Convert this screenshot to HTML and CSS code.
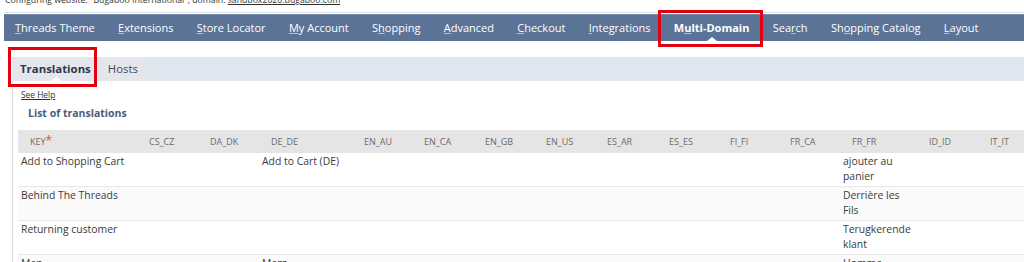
FILE: index.html
```html
<!DOCTYPE html>
<html>
<head>
    <meta charset="UTF-8">
    <title>Multi-Domain - Translations</title>
    <link rel="stylesheet" href="styles.css">
</head>
<body>
    <div class="config-line">Configuring website: "Bugaboo International", domain: <a href="#">sandbox2020.bugaboo.com</a></div>

    <div class="main-nav">
        <a href="#" class="nav-item"><u>T</u>hreads Theme</a>
        <a href="#" class="nav-item"><u>E</u>xtensions</a>
        <a href="#" class="nav-item"><u>S</u>tore Locator</a>
        <a href="#" class="nav-item"><u>M</u>y Account</a>
        <a href="#" class="nav-item">S<u>h</u>opping</a>
        <a href="#" class="nav-item"><u>A</u>dvanced</a>
        <a href="#" class="nav-item"><u>C</u>heckout</a>
        <a href="#" class="nav-item"><u>I</u>ntegrations</a>
        <a href="#" class="nav-item nav-active">M<u>u</u>lti-Domain</a>
        <a href="#" class="nav-item">Sea<u>r</u>ch</a>
        <a href="#" class="nav-item">Sh<u>o</u>pping Catalog</a>
        <a href="#" class="nav-item"><u>L</u>ayout</a>
    </div>

    <div class="sub-tabs">
        <a href="#" class="sub-tab sub-active">Translations</a>
        <a href="#" class="sub-tab">Hosts</a>
    </div>

    <div class="content">
        <a href="#" class="see-help">See Help</a>
        <div class="list-title">List of translations</div>

        <table class="trans-table">
            <colgroup>
                <col style="width:119px"><col style="width:61px"><col style="width:61px"><col style="width:93px">
                <col style="width:60px"><col style="width:61px"><col style="width:61px"><col style="width:61px">
                <col style="width:62px"><col style="width:61px"><col style="width:60px"><col style="width:62px">
                <col style="width:77px"><col style="width:61px"><col style="width:61px">
            </colgroup>
            <thead>
                <tr>
                    <th>KEY<span class="req">*</span></th>
                    <th>CS_CZ</th><th>DA_DK</th><th>DE_DE</th><th>EN_AU</th><th>EN_CA</th><th>EN_GB</th>
                    <th>EN_US</th><th>ES_AR</th><th>ES_ES</th><th>FI_FI</th><th>FR_CA</th><th>FR_FR</th>
                    <th>ID_ID</th><th>IT_IT</th>
                </tr>
            </thead>
            <tbody>
                <tr>
                    <td>Add to Shopping Cart</td><td></td><td></td><td>Add to Cart (DE)</td><td></td><td></td><td></td>
                    <td></td><td></td><td></td><td></td><td></td><td>ajouter au panier</td><td></td><td></td>
                </tr>
                <tr class="odd">
                    <td>Behind The Threads</td><td></td><td></td><td></td><td></td><td></td><td></td>
                    <td></td><td></td><td></td><td></td><td></td><td>Derrière les Fils</td><td></td><td></td>
                </tr>
                <tr>
                    <td>Returning customer</td><td></td><td></td><td></td><td></td><td></td><td></td>
                    <td></td><td></td><td></td><td></td><td></td><td>Terugkerende klant</td><td></td><td></td>
                </tr>
                <tr class="odd">
                    <td>Men</td><td></td><td></td><td>Mezz</td><td></td><td></td><td></td>
                    <td></td><td></td><td></td><td></td><td></td><td>Homme</td><td></td><td></td>
                </tr>
            </tbody>
        </table>
    </div>

    <div class="mark mark-nav"></div>
    <div class="mark mark-tab"></div>
</body>
</html>
```

FILE: styles.css
```css
body {
    margin: 0;
    font-family: "Open Sans", Arial, sans-serif;
    color: #333;
    background-color: #fff;
    overflow: hidden;
    position: relative;
}

a {
    color: inherit;
}

.config-line {
    margin: -6px 0 0 5px;
    padding-bottom: 6px;
    font-size: 8.7px;
    line-height: 12px;
    white-space: nowrap;
    border-bottom: 1px solid #d9dbe2;
}

.main-nav {
    display: flex;
    margin: 1px 0 0 4px;
    height: 27px;
    background-color: #5b7397;
    border-top: 1px solid #7489a8;
    box-sizing: border-box;
}

.nav-item {
    position: relative;
    padding: 0 12.3px 0 11px;
    font-size: 11px;
    line-height: 26px;
    color: #fff;
    text-decoration: none;
    white-space: nowrap;
}

.nav-item u {
    text-decoration-color: rgba(255, 255, 255, 0.55);
}

.nav-active {
    font-weight: bold;
}

.nav-active::after {
    content: "";
    position: absolute;
    left: 50%;
    bottom: 0;
    margin-left: -5px;
    border-left: 5px solid transparent;
    border-right: 5px solid transparent;
    border-bottom: 4px solid #fff;
}

.sub-tabs {
    display: flex;
    margin: 16px 0 0 12px;
    height: 24px;
    background-color: #e0e6ef;
}

.sub-tab {
    position: relative;
    padding: 0 9px 0 8px;
    font-size: 11.4px;
    line-height: 24px;
    color: #3d4a5c;
    text-decoration: none;
    background-color: #e4e6ec;
}

.sub-active {
    font-weight: bold;
    color: #2a384d;
}

.sub-active::after {
    content: "";
    position: absolute;
    left: 50%;
    bottom: 0;
    margin-left: -6px;
    border-left: 6px solid transparent;
    border-right: 6px solid transparent;
    border-bottom: 4px solid #fff;
}

.content {
    margin-left: 12px;
    padding: 8px 0 0 5px;
    border-left: 1px solid #dcdcdc;
    height: 200px;
}

.see-help {
    display: block;
    margin-left: 3px;
    font-size: 8.4px;
    line-height: 12px;
    color: #333;
}

.list-title {
    margin: 4px 0 0 10px;
    font-size: 10.5px;
    font-weight: bold;
    line-height: 16px;
    color: #4a5b77;
}

.trans-table {
    margin-top: 9px;
    table-layout: fixed;
    width: 1021px;
    border-collapse: collapse;
    font-size: 10.4px;
}

.trans-table th {
    height: 23px;
    padding: 0 4px 0 12px;
    text-align: left;
    font-size: 9px;
    font-weight: normal;
    color: #6b6b6b;
    background-color: #e5e5e5;
    white-space: nowrap;
}

.req {
    color: #e0582a;
    font-size: 12px;
    vertical-align: top;
    line-height: 12px;
}

.trans-table td {
    height: 30px;
    padding: 1px 4px 2px 3px;
    vertical-align: top;
    line-height: 15px;
    color: #3a3a3a;
    border-bottom: 1px solid #e9e9e9;
    overflow: hidden;
}

.trans-table tr.odd td {
    background-color: #fafafa;
}

.mark {
    position: absolute;
    border: 3px solid #e3000f;
    box-sizing: border-box;
}

.mark-nav {
    left: 658px;
    top: 10px;
    width: 105px;
    height: 37px;
}

.mark-tab {
    left: 8px;
    top: 47px;
    width: 89px;
    height: 40px;
}
```
